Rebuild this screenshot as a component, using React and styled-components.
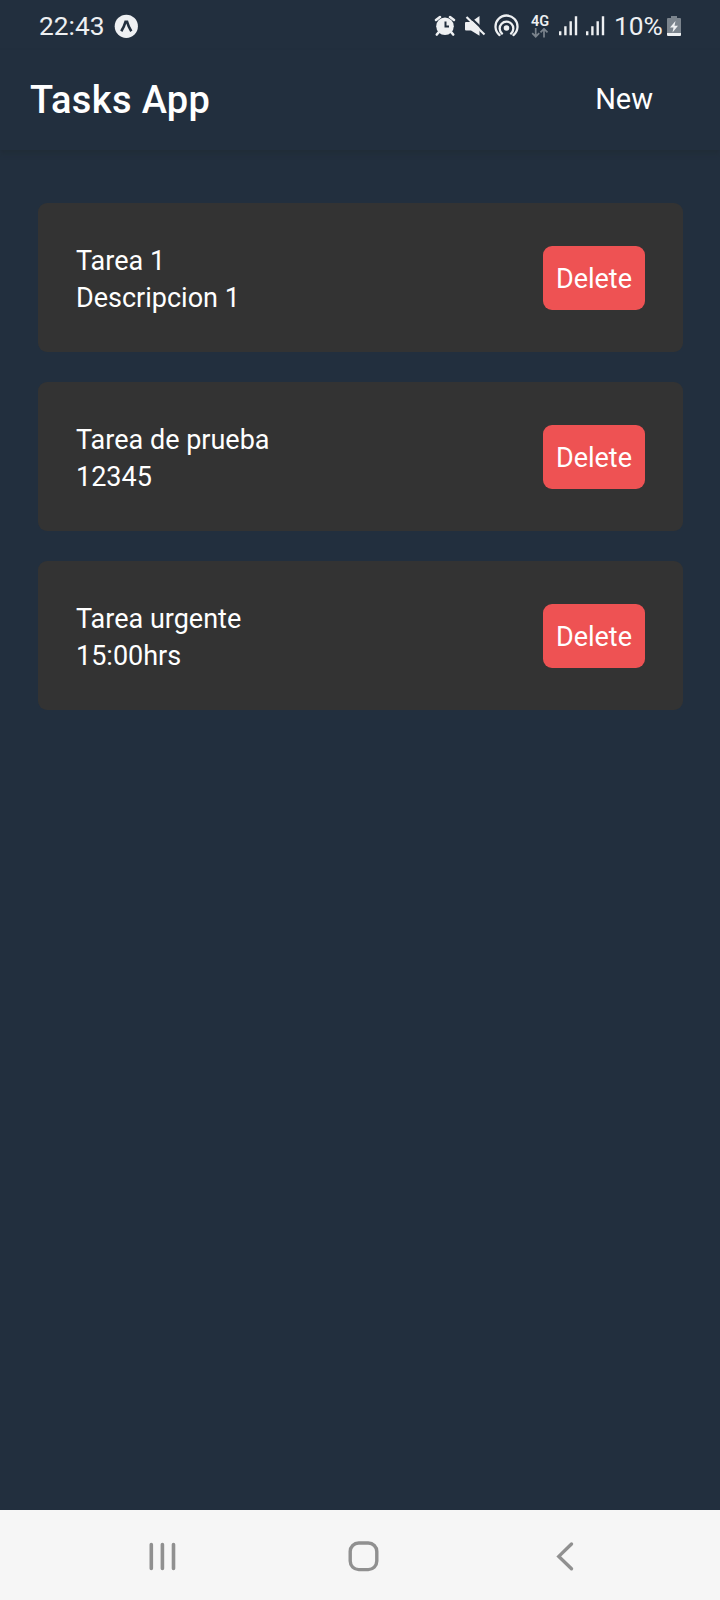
import React from "react";
import styled, { createGlobalStyle } from "styled-components";

const GlobalStyle = createGlobalStyle`
  * { box-sizing: border-box; }
  body { margin: 0; background: #222f3e; }
`;

const Screen = styled.div`
  width: 720px;
  height: 1600px;
  display: flex;
  flex-direction: column;
  background: #222f3e;
  color: #fff;
  font-family: Roboto, "Liberation Sans", sans-serif;
  overflow: hidden;
`;

const StatusBar = styled.header`
  height: 50px;
  flex: none;
  display: flex;
  justify-content: space-between;
  padding: 0 38px 0 39px;
  color: #eef0f2;
  font-size: 26.3px;
  line-height: 52px;
`;

const StatusGroup = styled.div`
  display: flex;
`;

const StatusText = styled.span`
  width: ${(p) => p.$width}px;
  padding-left: ${(p) => p.$indent || 0}px;
  white-space: nowrap;
`;

const Glyph = styled.svg`
  flex: none;
  display: block;
`;

const Network = styled.div`
  width: 30px;
  display: flex;
  flex-direction: column;
  align-items: center;
  padding-top: 15px;
  font-size: 14.5px;
  font-weight: 600;
  line-height: 13px;
`;

const AppBar = styled.div`
  height: 100px;
  flex: none;
  display: flex;
  align-items: center;
  justify-content: space-between;
  padding: 0 67px 2px 30px;
  box-shadow: 0 4px 4px rgba(33, 44, 56, 0.95);
`;

const Title = styled.h1`
  margin: 0;
  padding-top: 1px;
  font-size: 38px;
  font-weight: 500;
  line-height: 44px;
  letter-spacing: 0.35px;
`;

const NewButton = styled.button`
  border: 0;
  padding: 0;
  background: none;
  color: inherit;
  font: inherit;
  font-size: 29px;
  line-height: 36px;
`;

const TaskList = styled.ul`
  flex: 1;
  margin: 0;
  padding: 53px 37px 0 38px;
  list-style: none;
  display: flex;
  flex-direction: column;
  gap: 30px;
`;

const TaskCard = styled.li`
  height: 149px;
  display: flex;
  align-items: center;
  justify-content: space-between;
  padding: 0 38px;
  border-radius: 9px;
  background: #333;
`;

const TaskBody = styled.div`
  padding-top: 4px;
`;

const TaskText = styled.p`
  margin: 0;
  font-size: 27px;
  line-height: 37px;
`;

const DeleteButton = styled.button`
  width: 102px;
  height: 64px;
  padding: 3px 0 0;
  border: 0;
  border-radius: 9px;
  background: #ee5253;
  color: #fff;
  font: inherit;
  font-size: 27px;
`;

const NavBar = styled.nav`
  height: 90px;
  flex: none;
  display: flex;
  align-items: center;
  justify-content: space-between;
  padding: 2px 137px 0 142px;
  background: #f6f6f6;
`;

const TASKS = [
  { title: "Tarea 1", description: "Descripcion 1" },
  { title: "Tarea de prueba", description: "12345" },
  { title: "Tarea urgente", description: "15:00hrs" },
];

const ExpoIcon = () => (
  <Glyph width="26" height="50" viewBox="0 0 26 50">
    <circle cx="12.3" cy="26.3" r="11.6" fill="#eef0f2" />
    <path d="M7.3 31.2Q10 27 11.5 21.8H13.1Q14.6 27 17.3 31.2" fill="none" stroke="#222f3e" strokeWidth="2.6" />
  </Glyph>
);

const AlarmIcon = () => (
  <Glyph width="30" height="50" viewBox="430 0 30 50">
    <path d="M436 20L440 17M450 17L454 20M438.5 32.5L436.8 34.5M451.5 32.5L453.2 34.5" stroke="#eef0f2" strokeWidth="2.6" strokeLinecap="round" />
    <circle cx="445" cy="26.3" r="8.8" fill="#eef0f2" />
    <path d="M445.5 21.5V26.5H449" fill="none" stroke="#222f3e" strokeWidth="2" />
  </Glyph>
);

const MuteIcon = () => (
  <Glyph width="30" height="50" viewBox="460 0 30 50">
    <path d="M466 22H471L479.5 16V35.8L471 30.5H466Q465 30.5 465 29.5V23Q465 22 466 22Z" fill="#eef0f2" />
    <path d="M468 15.3L487 33.3" stroke="#222f3e" strokeWidth="2.2" />
    <path d="M466.5 17L484.5 34.5" stroke="#eef0f2" strokeWidth="2.2" />
  </Glyph>
);

const HotspotIcon = () => (
  <Glyph width="35" height="50" viewBox="490 0 35 50">
    <circle cx="506.5" cy="28" r="2.8" fill="#eef0f2" />
    <path d="M502 33.6A6.8 6.8 0 1 1 511 33.6M499.5 35A11 11 0 1 1 513.5 35" fill="none" stroke="#eef0f2" strokeWidth="2.3" strokeLinecap="round" />
  </Glyph>
);

const DataArrows = () => (
  <Glyph width="18" height="10" viewBox="0 0 18 10">
    <path d="M4.7 0V8.5M1.2 5.2L4.7 8.7L8.2 5.2M13 9.5V1M9.5 4.3L13 .8L16.5 4.3" fill="none" stroke="#7b848d" strokeWidth="1.7" />
  </Glyph>
);

const SignalIcon = () => (
  <Glyph width="27" height="50" viewBox="0 0 27 50">
    <path d="M1.2 31.3V35.3M6.4 26.3V35.3M11.7 21.3V35.3M17 16.3V35.3" stroke="#eef0f2" strokeWidth="2.4" />
  </Glyph>
);

const BatteryIcon = () => (
  <Glyph width="15" height="50" viewBox="667 0 15 50">
    <path d="M671 16H677V18H680Q681 18 681 19V33H667V19Q667 18 668 18H671Z" fill="#7b848d" />
    <path d="M667 33H681V35Q681 36 680 36H668Q667 36 667 35Z" fill="#eef0f2" />
    <path d="M675.5 21L670 27.5H673.5L672.5 32.5L678 25.8H674.5Z" fill="#eef0f2" />
  </Glyph>
);

const Task = ({ title, description }) => (
  <TaskCard>
    <TaskBody>
      <TaskText>{title}</TaskText>
      <TaskText>{description}</TaskText>
    </TaskBody>
    <DeleteButton>Delete</DeleteButton>
  </TaskCard>
);

export default function App() {
  return (
    <Screen>
      <GlobalStyle />
      <StatusBar>
        <StatusGroup>
          <StatusText $width={75}>22:43</StatusText>
          <ExpoIcon />
        </StatusGroup>
        <StatusGroup>
          <AlarmIcon />
          <MuteIcon />
          <HotspotIcon />
          <Network>
            4G
            <DataArrows />
          </Network>
          <Glyph width="4" height="50" />
          <SignalIcon />
          <SignalIcon />
          <StatusText $width={54} $indent={1}>10%</StatusText>
          <BatteryIcon />
        </StatusGroup>
      </StatusBar>
      <AppBar>
        <Title>Tasks App</Title>
        <NewButton>New</NewButton>
      </AppBar>
      <TaskList>
        {TASKS.map((task) => (
          <Task key={task.title} {...task} />
        ))}
      </TaskList>
      <NavBar>
        <Glyph width="40" height="40" viewBox="142 1536 40 40">
          <path d="M151.3 1544.5V1568.5M162.4 1544.5V1568.5M173.5 1544.5V1568.5" stroke="#909090" strokeWidth="3.6" strokeLinecap="round" />
        </Glyph>
        <Glyph width="40" height="40" viewBox="343 1536 40 40">
          <rect x="350.2" y="1543" width="26.6" height="26.6" rx="8.5" fill="none" stroke="#909090" strokeWidth="3.4" />
        </Glyph>
        <Glyph width="40" height="40" viewBox="543 1536 40 40">
          <path d="M571.5 1544L558.8 1556.4L571.5 1568.8" fill="none" stroke="#909090" strokeWidth="3.4" strokeLinecap="round" />
        </Glyph>
      </NavBar>
    </Screen>
  );
}
